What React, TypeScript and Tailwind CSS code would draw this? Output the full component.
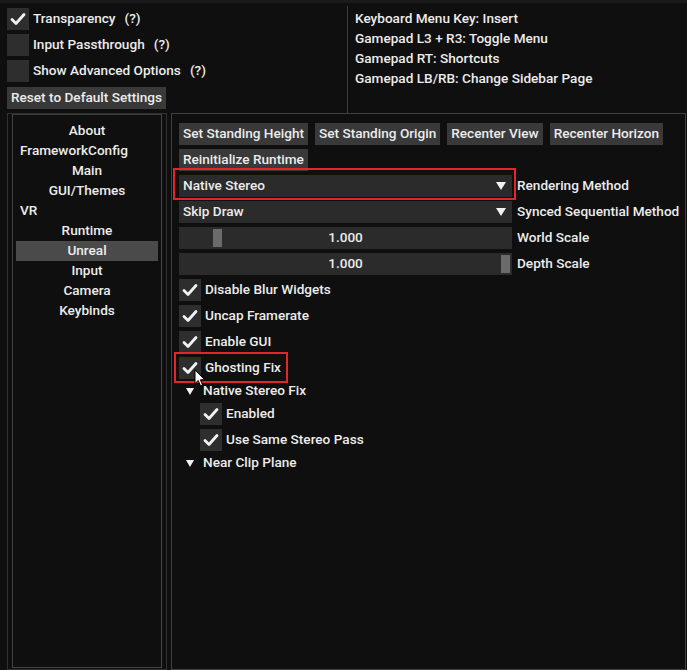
import React from 'react';

const font = { fontFamily: 'Roboto, "Noto Sans", sans-serif' };

function Check({ checked = true }: { checked?: boolean }) {
  return (
    <div className="w-[22px] h-[22px] bg-[#2e2e2e] flex items-center justify-center shrink-0">
      {checked && (
        <svg width="16" height="14" viewBox="0 0 16 14">
          <polyline points="2,7.5 6,11.5 14,2.5" fill="none" stroke="#f2f2f2" strokeWidth="2.8" strokeLinecap="round" strokeLinejoin="round" />
        </svg>
      )}
    </div>
  );
}

function CheckRow({ label, checked = true, children }: { label: string; checked?: boolean; children?: React.ReactNode }) {
  return (
    <div className="flex items-center h-[22px] gap-[4px]">
      <Check checked={checked} />
      <span>{label}</span>
      {children}
    </div>
  );
}

function Btn({ label }: { label: string }) {
  return <div className="h-[22px] px-[4px] bg-[#393939] flex items-center whitespace-nowrap">{label}</div>;
}

function Combo({ value }: { value: string }) {
  return (
    <div className="w-[333px] h-[22px] bg-[#2b2b2b] flex items-center justify-between pl-[4px] pr-[5px]">
      <span>{value}</span>
      <svg width="12" height="10" viewBox="0 0 12 10">
        <polygon points="1,1 11,1 6,9" fill="#f2f2f2" />
      </svg>
    </div>
  );
}

function Slider({ grab }: { grab: 'left' | 'right' }) {
  return (
    <div className="w-[333px] h-[22px] bg-[#2b2b2b] relative flex items-center justify-center">
      <div
        className={`absolute top-[2px] w-[9px] h-[18px] bg-[#6b6b6b] ${grab === 'left' ? 'left-[34px]' : 'right-[2px]'}`}
      />
      <span className="relative">1.000</span>
    </div>
  );
}

function TreeNode({ label }: { label: string }) {
  return (
    <div className="flex items-center h-[16px] pl-[7px]">
      <svg width="8" height="7" viewBox="0 0 8 7" className="mr-[9px]">
        <polygon points="0,0 8,0 4,7" fill="#f2f2f2" />
      </svg>
      <span>{label}</span>
    </div>
  );
}

const sidebar: { label: string; header?: boolean; active?: boolean }[] = [
  { label: 'About' },
  { label: 'FrameworkConfig', header: true },
  { label: 'Main' },
  { label: 'GUI/Themes' },
  { label: 'VR', header: true },
  { label: 'Runtime' },
  { label: 'Unreal', active: true },
  { label: 'Input' },
  { label: 'Camera' },
  { label: 'Keybinds' },
];

export default function App() {
  return (
    <div className="w-[687px] h-[670px] bg-[#0f0f0f] text-[#ececec] text-[13.6px] font-medium leading-none relative overflow-hidden border-t-[3px] border-[#1a1a1a]" style={font}>
      {/* top area */}
      <div className="flex h-[110px]">
        <div className="w-[347px] pl-[7px] pt-[5px] flex flex-col gap-[4px]">
          <CheckRow label="Transparency">
            <span className="ml-[5px]">(?)</span>
          </CheckRow>
          <CheckRow label="Input Passthrough" checked={false}>
            <span className="ml-[5px]">(?)</span>
          </CheckRow>
          <CheckRow label="Show Advanced Options" checked={false}>
            <span className="ml-[5px]">(?)</span>
          </CheckRow>
          <div className="mt-[1px] w-[159px] h-[22px] bg-[#393939] flex items-center pl-[4px]">Reset to Default Settings</div>
        </div>
        <div className="flex-1 border-l border-[#3a3a3a] mt-[3px] pl-[7px] pt-[2px] leading-[20px]">
          <div>Keyboard Menu Key: Insert</div>
          <div>Gamepad L3 + R3: Toggle Menu</div>
          <div>Gamepad RT: Shortcuts</div>
          <div>Gamepad LB/RB: Change Sidebar Page</div>
        </div>
      </div>

      {/* lower area */}
      <div className="flex h-[557px] pl-[7px] pr-[1px] gap-[4px]">
        <div className="w-[160px] border border-[#303030] px-[4px] pb-[1px] flex">
          <div className="flex-1 border border-[#444444] border-t-[#3a3a3a] pt-[6px] px-[3px]">
            {sidebar.map((s) => (
              <div
                key={s.label}
                className={`h-[20px] flex items-center ${s.header ? 'justify-start pl-[4px]' : 'justify-center'} ${s.active ? 'bg-[#4a4a4a]' : ''}`}
              >
                {s.label}
              </div>
            ))}
          </div>
        </div>

        <div className="flex-1 border border-[#404040] pl-[7px] pt-[9px] flex flex-col gap-[4px]">
          <div className="flex gap-[7px]">
            <Btn label="Set Standing Height" />
            <Btn label="Set Standing Origin" />
            <Btn label="Recenter View" />
            <Btn label="Recenter Horizon" />
          </div>
          <div className="flex">
            <Btn label="Reinitialize Runtime" />
          </div>
          <div className="flex items-center gap-[5px] relative">
            <Combo value="Native Stereo" />
            <span>Rendering Method</span>
            <div className="absolute left-[-6px] top-[-7px] w-[343px] h-[32px] border-[2.5px] border-[#e3262c] pointer-events-none" />
          </div>
          <div className="flex items-center gap-[5px]">
            <Combo value="Skip Draw" />
            <span>Synced Sequential Method</span>
          </div>
          <div className="flex items-center gap-[5px]">
            <Slider grab="left" />
            <span>World Scale</span>
          </div>
          <div className="flex items-center gap-[5px]">
            <Slider grab="right" />
            <span>Depth Scale</span>
          </div>
          <CheckRow label="Disable Blur Widgets" />
          <CheckRow label="Uncap Framerate" />
          <CheckRow label="Enable GUI" />
          <div className="relative">
            <CheckRow label="Ghosting Fix" />
            <div className="absolute left-[-5px] top-[-5px] w-[114px] h-[31px] border-[2.5px] border-[#e3262c] pointer-events-none" />
          </div>
          <TreeNode label="Native Stereo Fix" />
          <div className="pl-[21px] flex flex-col gap-[4px]">
            <CheckRow label="Enabled" />
            <CheckRow label="Use Same Stereo Pass" />
          </div>
          <TreeNode label="Near Clip Plane" />
        </div>
      </div>

      {/* mouse cursor */}
      <svg className="absolute left-[194px] top-[366px]" width="12" height="18" viewBox="0 0 12 18">
        <polygon points="1,1 1,14.5 4.2,11.5 6.5,16.8 8.6,15.9 6.4,10.8 10.8,10.8" fill="#ffffff" stroke="#000000" strokeWidth="1" strokeLinejoin="round" />
      </svg>
    </div>
  );
}
